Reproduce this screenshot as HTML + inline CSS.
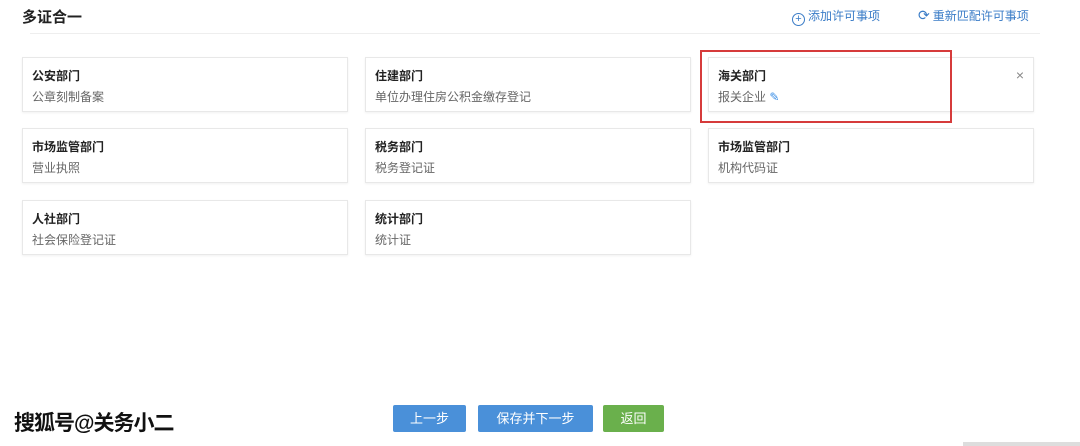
<!DOCTYPE html>
<html><head><meta charset="utf-8"><style>
body{margin:0;width:1080px;height:446px;background:#fff;position:relative;overflow:hidden;font-family:"Liberation Sans","Noto Sans CJK SC",sans-serif;}
.a{position:absolute}
.card{position:absolute;width:324px;height:53px;border:1px solid #e8e8e8;box-shadow:0 1px 2px rgba(0,0,0,.06);background:#fff}
.card b{position:absolute;left:9px;top:9px;font-size:12px;color:#222}
.card span{position:absolute;left:9px;top:30px;font-size:12px;color:#666}
.btn{position:absolute;top:405px;height:27px;line-height:27px;color:#fff;font-size:13px;text-align:center;border-radius:2px}
</style></head><body>
<div class="a" style="left:22px;top:6px;font-size:15px;font-weight:bold;color:#222">多证合一</div>
<div class="a" style="left:792px;top:7px;font-size:12px;color:#3a7cc7"><span style="display:inline-block;width:11px;height:11px;border:1px solid #3a7cc7;border-radius:50%;text-align:center;line-height:11px;font-size:11px;vertical-align:-2px;margin-right:3px">+</span>添加许可事项</div>
<div class="a" style="left:918px;top:7px;font-size:12px;color:#3a7cc7"><span style="font-size:14px;margin-right:3px">⟳</span>重新匹配许可事项</div>
<div class="a" style="left:30px;top:33px;width:1010px;height:1px;background:#eee"></div>
<div class="card" style="left:22px;top:57px"><b>公安部门</b><span>公章刻制备案</span></div>
<div class="card" style="left:365px;top:57px"><b>住建部门</b><span>单位办理住房公积金缴存登记</span></div>
<div class="card" style="left:708px;top:57px"><b>海关部门</b><span>报关企业 <span style="position:static;color:#3a8ee6">✎</span></span><i style="position:absolute;right:9px;top:9px;font-style:normal;color:#888;font-size:14px">×</i></div>
<div class="card" style="left:22px;top:128px"><b>市场监管部门</b><span>营业执照</span></div>
<div class="card" style="left:365px;top:128px"><b>税务部门</b><span>税务登记证</span></div>
<div class="card" style="left:708px;top:128px"><b>市场监管部门</b><span>机构代码证</span></div>
<div class="card" style="left:22px;top:200px"><b>人社部门</b><span>社会保险登记证</span></div>
<div class="card" style="left:365px;top:200px"><b>统计部门</b><span>统计证</span></div>
<div class="a" style="left:700px;top:50px;width:248px;height:69px;border:2px solid #d63b3b"></div>
<div class="btn" style="left:393px;width:73px;background:#4a90d9">上一步</div>
<div class="btn" style="left:478px;width:115px;background:#4a90d9">保存并下一步</div>
<div class="btn" style="left:603px;width:61px;background:#6ab04c">返回</div>
<div class="a" style="left:14px;top:407px;font-size:21px;color:#111;font-weight:bold;letter-spacing:-1px">搜狐号@关务小二</div>
<div class="a" style="left:963px;top:442px;width:117px;height:4px;background:#ddd"></div>
</body></html>
